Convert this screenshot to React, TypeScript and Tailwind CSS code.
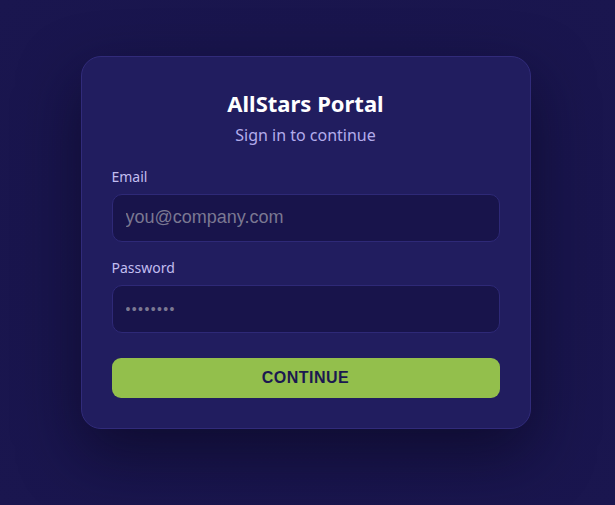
export default function App() {
  return (
    <div className="flex min-h-[505px] w-full items-center justify-center bg-[radial-gradient(ellipse_at_center,#1b1752_0%,#19154d_60%,#1a164f_100%)] pb-[21px] pr-[4px] font-['Noto_Sans',sans-serif]">
      <form
        className="flex w-[450px] flex-col rounded-[20px] border border-[#312b7a] bg-[#211d5f] px-[30px] pb-[30px] pt-[31px] shadow-[0_24px_60px_rgba(8,6,30,0.6)]"
        onSubmit={(e) => e.preventDefault()}
      >
        <h1 className="text-center text-[22px] font-bold leading-[30px] text-white">AllStars Portal</h1>
        <p className="mt-[5px] text-center text-[16px] leading-6 text-[#b3acec]">Sign in to continue</p>

        <label className="mt-[20px] text-[14px] leading-5 text-[#c2bdf0]" htmlFor="email">
          Email
        </label>
        <input
          id="email"
          type="email"
          placeholder="you@company.com"
          className="mt-[7px] h-[48px] rounded-[10px] border border-[#2e2977] bg-[#18144b] px-[13px] font-['Liberation_Sans',Arial,sans-serif] text-[18px] text-white outline-none placeholder:text-[#7b7892]"
        />

        <label className="mt-[16px] text-[14px] leading-5 text-[#c2bdf0]" htmlFor="password">
          Password
        </label>
        <input
          id="password"
          type="password"
          defaultValue="password"
          className="mt-[7px] h-[48px] rounded-[10px] border border-[#2e2977] bg-[#18144b] px-[13px] font-['Liberation_Sans',Arial,sans-serif] text-[14px] tracking-[1.4px] text-[#7b7892] outline-none"
        />

        <button
          type="submit"
          className="mt-[25px] h-[40px] rounded-[9px] bg-[#93bf4c] font-['Liberation_Sans',Arial,sans-serif] text-[16px] font-bold tracking-[0.5px] text-[#1b1850]"
        >
          CONTINUE
        </button>
      </form>
    </div>
  );
}
